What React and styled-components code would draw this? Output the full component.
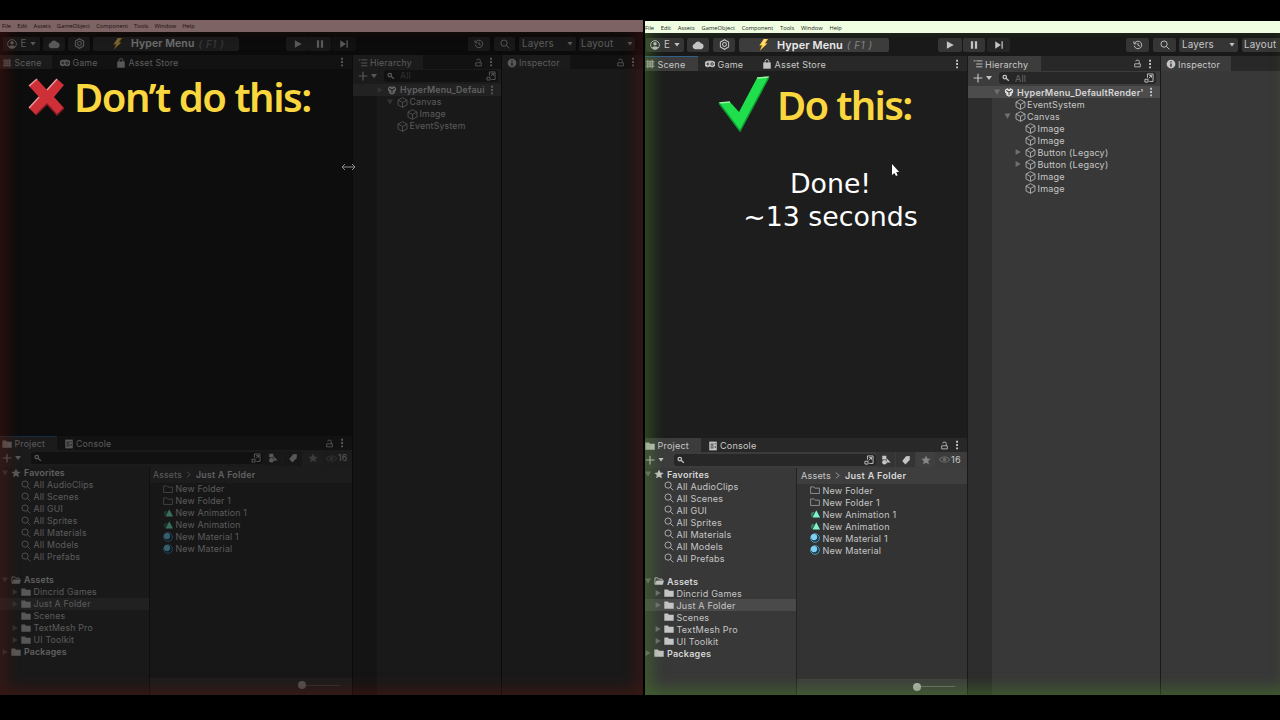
import React, { Fragment } from "react";
import styled, { createGlobalStyle } from "styled-components";

const GlobalStyle = createGlobalStyle`
  * {
    box-sizing: border-box;
  }
  body {
    margin: 0;
    background: #000;
    overflow: hidden;
  }
`;

const Stage = styled.main`
  position: relative;
  width: 1280px;
  height: 720px;
  display: flex;
  align-items: flex-start;
  gap: 2px;
  background: #000;
  overflow: hidden;
`;

const Editor = styled.section`
  position: relative;
  flex: none;
  width: ${(p) => p.$w}px;
  height: ${(p) => p.$h}px;
  margin-top: ${(p) => p.$top}px;
  display: flex;
  flex-direction: column;
  overflow: hidden;
  background: #191919;
  color: #c8c8c8;
  font-family: Inter, "Liberation Sans", sans-serif;
  font-size: ${(p) => p.$fs}px;
  letter-spacing: 0.2px;
  white-space: nowrap;
`;

const MenuBar = styled.nav`
  position: relative;
  z-index: 3;
  flex: none;
  height: 12px;
  display: flex;
  align-items: center;
  gap: ${(p) => p.$gap}px;
  padding-left: ${(p) => p.$pl}px;
  padding-top: ${(p) => (p.$dim ? 0 : 1)}px;
  background: ${(p) => p.$bg};
  color: ${(p) => (p.$dim ? "#1c0d0d" : "#222")};
  font: 500 5.75px "Open Sans", "Noto Sans", sans-serif;
  letter-spacing: 0;
`;

const Toolbar = styled.div`
  flex: none;
  height: 23px;
  display: flex;
  align-items: center;
`;

const ToolButton = styled.div`
  flex: none;
  width: ${(p) => p.$w}px;
  height: 14px;
  margin-left: ${(p) => p.$ml}px;
  padding: 0 ${(p) => p.$px || 0}px;
  display: flex;
  align-items: center;
  justify-content: ${(p) => p.$justify || "center"};
  border-radius: 2px;
  background: ${(p) => p.$bg || "#353535"};
  font-size: 9.8px;
`;

const HyperLabel = styled.b`
  margin-left: 8px;
  font-size: ${(p) => p.$fs}px;
  font-weight: 600;
  letter-spacing: 0.1px;
  color: #ececec;
`;

const Shortcut = styled.i`
  margin-left: 4px;
  font-size: 10px;
  letter-spacing: 0.5px;
  color: #858585;
`;

const Body = styled.div`
  flex: 1;
  min-height: 0;
  display: flex;
  gap: 1px;
`;

const Column = styled.div`
  flex: none;
  width: ${(p) => p.$w}px;
  display: flex;
  flex-direction: column;
  background: ${(p) => p.$bg || "#383838"};
`;

const TabStrip = styled.div`
  flex: none;
  height: ${(p) => p.$h || 15}px;
  display: flex;
  align-items: stretch;
  background: #282828;
`;

const Tab = styled.div`
  flex: none;
  width: ${(p) => p.$w}px;
  display: flex;
  align-items: center;
  gap: 2.5px;
  padding-left: ${(p) => p.$pl || 0}px;
  background: ${(p) => (p.$active ? "#3c3c3c" : "transparent")};
  border-top: 1px solid ${(p) => (p.$focus ? "#2f5f8a" : "transparent")};
`;

const TabTools = styled.div`
  margin-left: auto;
  display: flex;
  align-items: center;
  gap: 3px;
  padding-right: ${(p) => p.$pr}px;
`;

const Viewport = styled.div`
  flex: none;
  height: ${(p) => p.$h}px;
  background: #1d1d1d;
`;

const Strip = styled.div`
  flex: none;
  height: ${(p) => p.$h}px;
  display: flex;
  align-items: center;
  padding-left: ${(p) => p.$pl}px;
  padding-bottom: 1px;
  background: #3c3c3c;
`;

const SearchField = styled.div`
  flex: none;
  width: ${(p) => p.$w}px;
  height: 12px;
  margin-left: ${(p) => p.$ml}px;
  padding: 0 2px;
  display: flex;
  align-items: center;
  border-radius: 3px;
  background: #272727;
  color: #6a6a6a;
  svg:last-child {
    margin-left: auto;
  }
`;

const SceneTree = styled.div`
  flex: 1;
  display: flex;
  flex-direction: column;
  background: linear-gradient(90deg, #2d2d2d 24px, #383838 24px);
`;

const Row = styled.div`
  flex: none;
  height: ${(p) => p.$h || 12}px;
  display: flex;
  align-items: center;
  padding-left: ${(p) => p.$pl}px;
  background: ${(p) => p.$bg || "transparent"};
  font-weight: ${(p) => (p.$bold ? 600 : 400)};
  color: ${(p) => (p.$bold ? "#d6d6d6" : "#c6c6c6")};
`;

const Arrow = styled.span`
  flex: none;
  width: 6px;
  height: 6px;
  margin-right: ${(p) => p.$mr}px;
  background: #707070;
  visibility: ${(p) => (p.$state ? "visible" : "hidden")};
  clip-path: ${(p) =>
    p.$state === "open"
      ? "polygon(0 10%, 100% 10%, 50% 95%)"
      : "polygon(10% 0, 95% 50%, 10% 100%)"};
`;

const RowText = styled.span`
  margin-left: ${(p) => p.$ml}px;
`;

const Caret = styled.span`
  flex: none;
  width: 6px;
  height: 4px;
  margin-left: ${(p) => p.$ml || 0}px;
  background: #c4c4c4;
  clip-path: polygon(0 0, 100% 0, 50% 100%);
`;

const Split = styled.div`
  flex: 1;
  min-height: 0;
  display: flex;
  gap: 1px;
  background: #222;
`;

const FolderTree = styled.div`
  flex: none;
  width: ${(p) => p.$w}px;
  background: #383838;
`;

const Files = styled.div`
  flex: 1;
  display: flex;
  flex-direction: column;
  background: #333;
`;

const Crumbs = styled.div`
  flex: none;
  height: 16px;
  padding-left: ${(p) => p.$pl}px;
  padding-bottom: 1px;
  display: flex;
  align-items: center;
  gap: 3.5px;
  background: #3e3e3e;
  b {
    font-weight: 600;
    letter-spacing: 0.3px;
    color: #d6d6d6;
  }
`;

const SliderBar = styled.div`
  height: ${(p) => p.$h}px;
  margin-top: auto;
  display: flex;
  align-items: center;
  justify-content: flex-end;
  padding: 0 12px ${(p) => p.$pb}px 0;
  background: #3e3e3e;
`;

const Knob = styled.span`
  width: 8px;
  height: 8px;
  border-radius: 50%;
  background: #b4b4b4;
`;

const Track = styled.span`
  width: 34px;
  height: 1px;
  background: #6c6c6c;
`;

const FilterButton = styled.div`
  flex: none;
  width: 19px;
  height: 15px;
  margin-left: ${(p) => p.$ml || 0}px;
  display: flex;
  align-items: center;
  justify-content: center;
  background: ${(p) => (p.$on ? "#343434" : "#404040")};
`;

const Dim = styled.div`
  position: absolute;
  inset: 0;
  background: rgba(0, 0, 0, 0.55);
`;

const Glow = styled.div`
  position: absolute;
  inset: ${(p) => p.$inset};
  z-index: 2;
  box-shadow: inset 0 0 15px 6px ${(p) => p.$color};
`;

const Title = styled.h1`
  position: absolute;
  left: ${(p) => p.$x}px;
  top: ${(p) => p.$y}px;
  margin: 0;
  color: #fad73e;
  font: 650 40px/54px "Noto Sans", "Open Sans", sans-serif;
  letter-spacing: ${(p) => p.$ls}px;
  white-space: nowrap;
`;

const Result = styled.p`
  position: absolute;
  left: 700px;
  top: 167px;
  width: 261px;
  margin: 0;
  text-align: center;
  color: #fff;
  font: 26.8px/33px "DejaVu Sans", sans-serif;
`;

const Mark = styled.svg`
  position: absolute;
  left: ${(p) => p.$x}px;
  top: ${(p) => p.$y}px;
`;

const Svg = styled.svg`
  flex: none;
  display: block;
  width: ${(p) => p.$s || 10}px;
  height: ${(p) => p.$s || 10}px;
  color: ${(p) => p.$c || "#c4c4c4"};
  margin-left: ${(p) => p.$ml || 0}px;
  fill: none;
  stroke: currentColor;
  stroke-width: ${(p) => p.$sw || 1.5};
`;

const fill = { fill: "currentColor", stroke: "none" };

const shapes = {
  user: (
    <Fragment>
      <circle cx="8" cy="8" r="7" />
      <circle cx="8" cy="6" r="2.8" {...fill} />
      <path d="M3 12.5C4 9.5 12 9.5 13 12.5C11 15.5 5 15.5 3 12.5z" {...fill} />
    </Fragment>
  ),
  cloud: (
    <path d="M4 13.5a3.6 3.6 0 0 1-.4-7.1A4.6 4.6 0 0 1 12 5.8a3.9 3.9 0 0 1 .4 7.7z" {...fill} />
  ),
  hex: (
    <Fragment>
      <path d="M8 1l6 3.5v7L8 15l-6-3.5v-7z" />
      <circle cx="8" cy="8" r="2.8" />
    </Fragment>
  ),
  play: <path d="M3 2l11 6-11 6z" {...fill} />,
  pause: <path d="M3 2h3.6v12H3zM9.4 2H13v12H9.4z" {...fill} />,
  step: <path d="M2 2l9 6-9 6zM12 2h2v12h-2z" {...fill} />,
  history: <path d="M3 4.5A6 6 0 1 1 2 9M1.5 2v4h4M8 4.5V8.5l3 1.5" />,
  search: (
    <Fragment>
      <circle cx="6.5" cy="6.5" r="5" />
      <path d="M10.2 10.2L15 15" />
    </Fragment>
  ),
  smallSearch: (
    <Fragment>
      <circle cx="6" cy="6.5" r="2.8" />
      <path d="M8 8.5l4.5 4" />
    </Fragment>
  ),
  grid: <path d="M4.5 1v14M11.5 1v14M1 4.5h14M1 11.5h14M8 2v12M2 8h12" />,
  game: (
    <Fragment>
      <path
        d="M4.5 3.5h7a4.5 4.5 0 0 1 0 9C10 12.5 9.5 11 8 11s-2 1.5-3.5 1.5a4.5 4.5 0 0 1 0-9z"
        fill="currentColor"
      />
      <circle cx="11.5" cy="8" r="2" stroke="#333" />
      <path d="M2.2 8h4.6M4.5 5.7v4.6" stroke="#333" />
    </Fragment>
  ),
  bag: (
    <Fragment>
      <path d="M2 5.5h12V15.5H2z" {...fill} />
      <path d="M5 7V4a3 3 0 0 1 6 0v3" />
    </Fragment>
  ),
  kebab: <path d="M6.6 1.2h3v3h-3zM6.6 6.5h3v3h-3zM6.6 11.8h3v3h-3z" {...fill} />,
  list: <path d="M1 3h3M5.5 3H15M5 8h10M5 12.5h10" />,
  lock: <path d="M3 8.5h10V14H3zM5 4.5V4a2 2 0 0 1 2-2h2a2 2 0 0 1 2 2v4.5" />,
  info: (
    <Fragment>
      <circle cx="8" cy="8" r="7" {...fill} />
      <path d="M8 7v5.5M8 3.5v2" stroke="#333" strokeWidth="2.2" />
    </Fragment>
  ),
  plus: <path d="M8 1v14M1 8h14" />,
  popout: (
    <Fragment>
      <path d="M5.5 7.5V1.500h9v12H8.500" />
      <path d="M1.5 10h5v4.5h-5zM7.5 8.5L12 4M8.5 4H12v3.5" />
    </Fragment>
  ),
  unity: (
    <Fragment>
      <path d="M8 0.5l6.5 3.7v7.6L8 15.5l-6.5-3.7V4.2z" {...fill} />
      <path
        d="M8 8v5M8 8L3.5 5.5M8 8l4.5-2.5M6 0l2 3 2-3M0 9l3 2-1 3M16 9l-3 2 1 3"
        stroke="#444"
        strokeWidth="1.7"
      />
    </Fragment>
  ),
  cube: <path d="M8 1l6.5 3.4v7.2L8 15l-6.5-3.4V4.4zM1.5 4.4L8 8l6.5-3.6M8 8v7" />,
  star: (
    <path
      d="M8 .8l2.2 4.9 5.3.5-4 3.5 1.2 5.2L8 12.2l-4.7 2.7 1.2-5.2-4-3.5 5.3-.5z"
      {...fill}
    />
  ),
  folder: <path d="M.5 2.5h5.8L8 4.5h7.5V14H.5z" {...fill} />,
  folderLine: <path d="M1 3h5l1.7 2H15v8.5H1z" />,
  folderOpen: (
    <Fragment>
      <path d="M1.5 13V3H6l1.5 2H13v2" />
      <path d="M4 7h12l-2 7H1z" {...fill} />
    </Fragment>
  ),
  console: (
    <Fragment>
      <path d="M2 1h12v14H2z" {...fill} />
      <path d="M4 5h5M4 8h5M4 11h5M11.5 3.5v2M11.5 8v3" stroke="#333" />
    </Fragment>
  ),
  types: (
    <Fragment>
      <path d="M2 1h6.5v6H2zM9 5l6.5 7H9z" {...fill} />
      <circle cx="5.5" cy="11.5" r="3.7" {...fill} />
    </Fragment>
  ),
  tag: <path d="M8 2l6-.5V8l-7 7-5-5.5z" {...fill} />,
  eye: (
    <Fragment>
      <path d="M.5 8C4 2.5 12 2.5 15.5 8 12 13.5 4 13.5.5 8z" />
      <circle cx="8" cy="8" r="2.8" {...fill} />
    </Fragment>
  ),
  anim: (
    <Fragment>
      <path d="M4.5 4.5c-4 1.5-4 7-1.3 8.5l4-8z" fill="#3c7a68" stroke="none" />
      <path d="M10 2L16 13.5H4z" fill="#7ff5cd" stroke="none" />
    </Fragment>
  ),
  material: (
    <Fragment>
      <circle cx="8" cy="8" r="7" fill="#1d3b4a" stroke="#5fb4dc" />
      <circle cx="6.5" cy="6.5" r="5" fill="#7fd0f2" stroke="none" />
    </Fragment>
  ),
  bolt: (
    <Fragment>
      <path d="M9 0h6l-4 5.5h3L3.5 16 6.5 8.5H3z" fill="#f9b52b" stroke="none" />
      <path d="M9.5 0h3.5L9.5 6.5h3L6 12.5 8.5 7.5H4.5z" fill="#ffe27a" stroke="none" />
    </Fragment>
  ),
  chevron: <path d="M4 1.5L12 8l-8 6.5" />,
};

const Icon = ({ name, s, c, sw, ml }) => (
  <Svg viewBox="0 0 16 16" $s={s} $c={c} $sw={sw} $ml={ml}>
    {shapes[name]}
  </Svg>
);

const menuItems = ["File", "Edit", "Assets", "GameObject", "Component", "Tools", "Window", "Help"];

const searches = ["AudioClips", "Scenes", "GUI", "Sprites", "Materials", "Models", "Prefabs"];

const folders = [
  ["Dincrid Games", "closed"],
  ["Just A Folder", "closed"],
  ["Scenes", ""],
  ["TextMesh Pro", "closed"],
  ["UI Toolkit", "closed"],
];

const files = [
  ["folderLine", "New Folder"],
  ["folderLine", "New Folder 1"],
  ["anim", "New Animation 1"],
  ["anim", "New Animation"],
  ["material", "New Material 1"],
  ["material", "New Material"],
];

const dont = {
  width: 643,
  height: 675,
  top: 20,
  fontSize: 8.75,
  menu: { bg: "#7d6363", pl: 2, gap: 6.1 },
  // [margin-left, width] of each toolbar button
  tools: [[3, 37], [3, 22], [3, 22], [3, 146], [47, 23], [0, 22], [1, 24], [112, 22], [4, 21], [4, 57], [3, 56]],
  hyper: 10.5,
  strip: 14,
  scene: { w: 352, tab: 52, pl: 2, game: 60, gamePl: 8, store: 80, storePl: 4, view: 367 },
  hierarchy: { w: 148, tab: 70, root: "HyperMenu_Defaui", rootState: "closed", field: 114, base: 24, step: 10 },
  nodes: [
    ["Canvas", 1, "open"],
    ["Image", 2, ""],
    ["EventSystem", 1, ""],
  ],
  inspector: { w: 141, tab: 68 },
  project: { tab: 57, pl: 2, tree: 149, base: 2, plus: 2, strip: 17, field: 232, fieldMl: 10, crumb: 3, file: 13, bar: 17, barPb: 3 },
};

const doThis = {
  width: 650,
  height: 674,
  top: 21,
  fontSize: 9.05,
  menu: { bg: "#f0ffe2", pl: 0, gap: 6.7 },
  tools: [[1, 38], [3, 22], [4, 22], [4, 150], [49, 24], [1, 22], [2, 23], [116, 23], [4, 23], [3, 59], [4, 59]],
  hyper: 10.9,
  strip: 15,
  scene: { w: 322, tab: 53, pl: 0, game: 62, gamePl: 7, store: 80, storePl: 2, view: 367 },
  hierarchy: { w: 192, tab: 73, root: "HyperMenu_DefaultRender'", rootState: "open", field: 157, base: 26, step: 10.5 },
  nodes: [
    ["EventSystem", 1, ""],
    ["Canvas", 1, "open"],
    ["Image", 2, ""],
    ["Image", 2, ""],
    ["Button (Legacy)", 2, "closed"],
    ["Button (Legacy)", 2, "closed"],
    ["Image", 2, ""],
    ["Image", 2, ""],
  ],
  inspector: { w: 134, tab: 70, bare: true },
  project: { tab: 56, pl: 0, tree: 151, base: 0, plus: 0, strip: 16, field: 202, fieldMl: 10, crumb: 4, file: 13, bar: 16, barPb: 1 },
};

const Top = ({ tools: t, hyper }) => (
  <Toolbar>
    <ToolButton $ml={t[0][0]} $w={t[0][1]} $px={4} $justify="space-between">
      <Icon name="user" />
      <span>E</span>
      <Caret />
    </ToolButton>
    <ToolButton $ml={t[1][0]} $w={t[1][1]}>
      <Icon name="cloud" s={12} />
    </ToolButton>
    <ToolButton $ml={t[2][0]} $w={t[2][1]}>
      <Icon name="hex" s={11} />
    </ToolButton>
    <ToolButton $ml={t[3][0]} $w={t[3][1]} $px={18} $justify="flex-start" $bg="#3c3c3c">
      <Icon name="bolt" s={12} />
      <HyperLabel $fs={hyper}>Hyper Menu</HyperLabel>
      <Shortcut>( F1 )</Shortcut>
    </ToolButton>
    <ToolButton $ml={t[4][0]} $w={t[4][1]}>
      <Icon name="play" s={10} />
    </ToolButton>
    <ToolButton $ml={t[5][0]} $w={t[5][1]}>
      <Icon name="pause" s={10} />
    </ToolButton>
    <ToolButton $ml={t[6][0]} $w={t[6][1]} $bg="#262626">
      <Icon name="step" s={10} />
    </ToolButton>
    <ToolButton $ml={t[7][0]} $w={t[7][1]}>
      <Icon name="history" />
    </ToolButton>
    <ToolButton $ml={t[8][0]} $w={t[8][1]}>
      <Icon name="search" />
    </ToolButton>
    <ToolButton $ml={t[9][0]} $w={t[9][1]} $px={3} $justify="space-between">
      <span>Layers</span>
      <Caret />
    </ToolButton>
    <ToolButton $ml={t[10][0]} $w={t[10][1]} $px={2} $justify="space-between">
      <span>Layout</span>
      <Caret />
    </ToolButton>
  </Toolbar>
);

const Project = ({ p }) => (
  <Fragment>
    <TabStrip $h={14}>
      <Tab $w={p.tab} $pl={p.pl} $active $focus={p.pl > 0}>
        <Icon name="folder" />
        <span>Project</span>
      </Tab>
      <Tab $w={70} $pl={6.5}>
        <Icon name="console" />
        <span>Console</span>
      </Tab>
      <TabTools $pr={5}>
        <Icon name="lock" s={9} />
        <Icon name="kebab" />
      </TabTools>
    </TabStrip>
    <Strip $h={p.strip} $pl={p.plus}>
      <Icon name="plus" sw={1.8} />
      <Caret $ml={3} />
      <SearchField $w={p.field} $ml={p.fieldMl}>
        <Icon name="smallSearch" s={10} sw={2} />
        <Icon name="popout" />
      </SearchField>
      <FilterButton $on>
        <Icon name="types" />
      </FilterButton>
      <FilterButton $ml={1} $on>
        <Icon name="tag" />
      </FilterButton>
      <FilterButton $ml={1}>
        <Icon name="star" c="#858585" />
      </FilterButton>
      <Icon name="eye" s={11} ml={4} c="#666" />
      <RowText $ml={1}>16</RowText>
    </Strip>
    <Split>
      <FolderTree $w={p.tree}>
        <Row $pl={p.base} $bold>
          <Arrow $state="open" $mr={3} />
          <Icon name="star" />
          <RowText $ml={3}>Favorites</RowText>
        </Row>
        {searches.map((name) => (
          <Row key={name} $pl={p.base + 19}>
            <Icon name="search" sw={1.3} />
            <RowText $ml={2.5}>All {name}</RowText>
          </Row>
        ))}
        <Row $h={11} />
        <Row $pl={p.base} $bold>
          <Arrow $state="open" $mr={3} />
          <Icon name="folderOpen" />
          <RowText $ml={3}>Assets</RowText>
        </Row>
        {folders.map(([name, state]) => (
          <Row key={name} $pl={p.base + 10} $bg={name === "Just A Folder" && "#4a4a4a"}>
            <Arrow $state={state} $mr={3} />
            <Icon name="folder" />
            <RowText $ml={2.5}>{name}</RowText>
          </Row>
        ))}
        <Row $pl={p.base} $bold>
          <Arrow $state="closed" $mr={3} />
          <Icon name="folder" />
          <RowText $ml={3}>Packages</RowText>
        </Row>
      </FolderTree>
      <Files>
        <Crumbs $pl={p.crumb}>
          <span>Assets</span>
          <Icon name="chevron" s={7} />
          <b>Just A Folder</b>
        </Crumbs>
        {files.map(([icon, name]) => (
          <Row key={name} $pl={p.file}>
            <Icon name={icon} sw={1.2} c="#a8a8a8" />
            <RowText $ml={2.5}>{name}</RowText>
          </Row>
        ))}
        <SliderBar $h={p.bar} $pb={p.barPb}>
          <Knob />
          <Track />
        </SliderBar>
      </Files>
    </Split>
  </Fragment>
);

const Hierarchy = ({ h, nodes, strip }) => (
  <Column $w={h.w}>
    <TabStrip $h={strip}>
      <Tab $w={h.tab} $pl={4.5} $active>
        <Icon name="list" />
        <span>Hierarchy</span>
      </Tab>
      <TabTools $pr={5}>
        <Icon name="lock" s={9} />
        <Icon name="kebab" />
      </TabTools>
    </TabStrip>
    <Strip $h={15} $pl={5}>
      <Icon name="plus" sw={1.8} />
      <Caret $ml={3} />
      <SearchField $w={h.field} $ml={7}>
        <Icon name="smallSearch" s={10} sw={2} />
        <RowText $ml={4}>All</RowText>
        <Icon name="popout" />
      </SearchField>
    </Strip>
    <SceneTree>
      <Row $pl={h.base} $bold $bg="#4c4c4c">
        <Arrow $state={h.rootState} $mr={4} />
        <Icon name="unity" c="#e4e4e4" />
        <RowText $ml={3}>{h.root}</RowText>
        <TabTools $pr={4}>
          <Icon name="kebab" />
        </TabTools>
      </Row>
      {nodes.map(([name, depth, state], i) => (
        <Row key={i} $pl={h.base + depth * h.step}>
          <Arrow $state={state} $mr={4} />
          <Icon name="cube" s={11} sw={1.3} c="#b4b4b4" />
          <RowText $ml={1.5}>{name}</RowText>
        </Row>
      ))}
    </SceneTree>
  </Column>
);

const EditorWindow = ({ cfg, dim }) => (
  <Editor $w={cfg.width} $h={cfg.height} $top={cfg.top} $fs={cfg.fontSize}>
    <MenuBar $bg={cfg.menu.bg} $pl={cfg.menu.pl} $gap={cfg.menu.gap} $dim={dim}>
      {menuItems.map((item) => (
        <span key={item}>{item}</span>
      ))}
    </MenuBar>
    <Top tools={cfg.tools} hyper={cfg.hyper} />
    <Body>
      <Column $w={cfg.scene.w}>
        <TabStrip $h={cfg.strip}>
          <Tab $w={cfg.scene.tab} $pl={cfg.scene.pl} $active $focus={!dim}>
            <Icon name="grid" />
            <span>Scene</span>
          </Tab>
          <Tab $w={cfg.scene.game} $pl={cfg.scene.gamePl}>
            <Icon name="game" />
            <span>Game</span>
          </Tab>
          <Tab $w={cfg.scene.store} $pl={cfg.scene.storePl}>
            <Icon name="bag" />
            <span>Asset Store</span>
          </Tab>
          <TabTools $pr={5}>
            <Icon name="kebab" />
          </TabTools>
        </TabStrip>
        <Viewport $h={cfg.scene.view} />
        <Project p={cfg.project} />
      </Column>
      <Hierarchy h={cfg.hierarchy} nodes={cfg.nodes} strip={cfg.strip} />
      <Column $w={cfg.inspector.w}>
        <TabStrip $h={cfg.strip}>
          <Tab $w={cfg.inspector.tab} $pl={4.5} $active>
            <Icon name="info" />
            <span>Inspector</span>
          </Tab>
          {!cfg.inspector.bare && (
            <TabTools $pr={5}>
              <Icon name="lock" s={9} />
              <Icon name="kebab" />
            </TabTools>
          )}
        </TabStrip>
      </Column>
    </Body>
    {dim && <Dim />}
    <Glow
      $inset={dim ? "0" : "0 2px 0 0"}
      $color={dim ? "rgba(105, 22, 14, 0.38)" : "rgba(75, 135, 38, 0.46)"}
    />
  </Editor>
);

const App = () => (
  <Stage>
    <GlobalStyle />
    <EditorWindow cfg={dont} dim />
    <EditorWindow cfg={doThis} />
    <Mark $x={28} $y={78} width="37" height="38" viewBox="0 0 37 38">
      <path d="M9 1l10 11L29 1l7 6-10 12 10 11-7 7-10-11L8 37l-7-7 10-11L1 8z" fill="#cf3038" />
      <path d="M1 8l8-7M29 1L19 12M1 30l10-11" fill="none" stroke="#e99a9c" strokeWidth="1.5" />
      <path d="M36 30l-7 7-10-11L8 37" fill="none" stroke="#7d1a22" strokeWidth="1.5" />
    </Mark>
    <Title $x={74} $y={70} $ls={-1.5}>
      Don’t do this:
    </Title>
    <Mark $x={718} $y={76} width="52" height="56" viewBox="0 0 52 56">
      <path d="M1 27l11-1 9 10L39 2l12-1-29 54z" fill="#1fe04c" />
      <path d="M1 27l11-1M39 2l12-1" fill="none" stroke="#9af5a4" strokeWidth="1.5" />
      <path d="M51 1L22 55 1 27" fill="none" stroke="#109a30" strokeWidth="1.5" />
    </Mark>
    <Title $x={777} $y={78} $ls={-1.7}>
      Do this:
    </Title>
    <Result>
      Done!
      <br />
      ~13 seconds
    </Result>
    <Mark $x={341} $y={162} width="15" height="10" viewBox="0 0 15 10">
      <path d="M1 5h13M4 2L1 5l3 3M11 2l3 3-3 3" fill="none" stroke="#8d8d8d" />
    </Mark>
    <Mark $x={891} $y={163} width="9" height="14" viewBox="0 0 9 14">
      <path d="M1 1v11l2.5-2 1.5 3 1.6-.8L5.2 9h3z" fill="#fff" />
    </Mark>
  </Stage>
);

export default App;
